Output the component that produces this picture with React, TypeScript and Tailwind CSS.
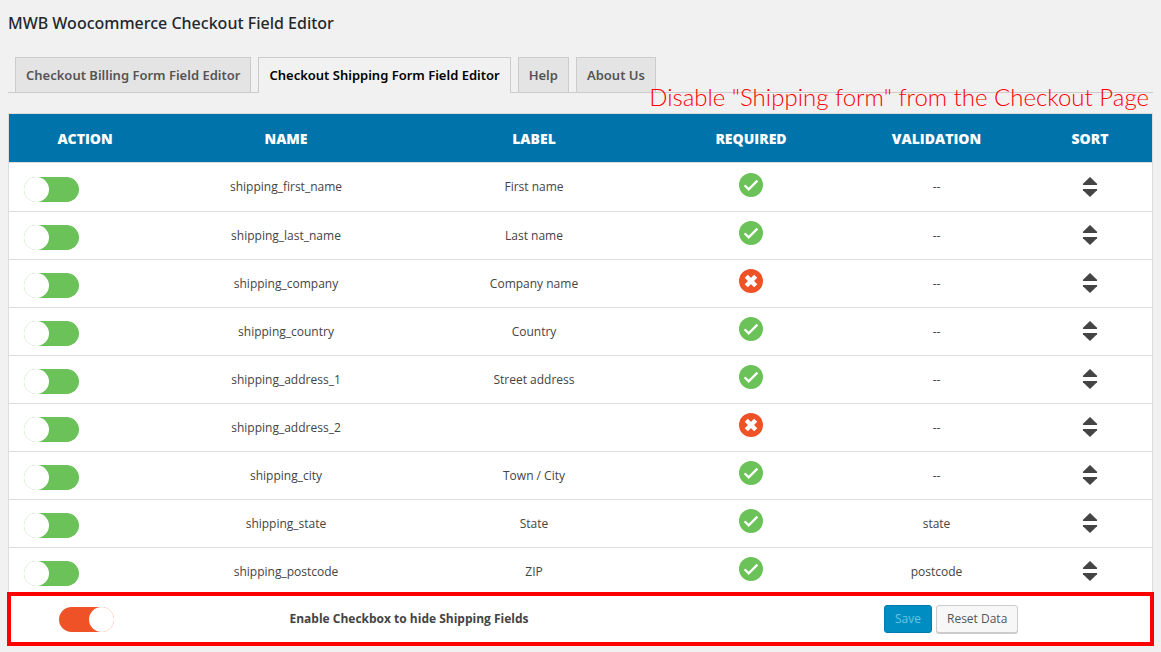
const tabs = [
  { label: 'Checkout Billing Form Field Editor', active: false },
  { label: 'Checkout Shipping Form Field Editor', active: true },
  { label: 'Help', active: false },
  { label: 'About Us', active: false },
];

// Pixel widths act as proportions: the fixed-layout table scales them to its own width.
const columns = [
  { title: 'ACTION', width: 'w-[152px]' },
  { title: 'NAME', width: 'w-[250px]' },
  { title: 'LABEL', width: 'w-[246px]' },
  { title: 'REQUIRED', width: 'w-[188px]' },
  { title: 'VALIDATION', width: 'w-[183px]' },
  { title: 'SORT', width: 'w-[124px]' },
];

const fields = [
  { name: 'shipping_first_name', label: 'First name', required: true, validation: '--' },
  { name: 'shipping_last_name', label: 'Last name', required: true, validation: '--' },
  { name: 'shipping_company', label: 'Company name', required: false, validation: '--' },
  { name: 'shipping_country', label: 'Country', required: true, validation: '--' },
  { name: 'shipping_address_1', label: 'Street address', required: true, validation: '--' },
  { name: 'shipping_address_2', label: '', required: false, validation: '--' },
  { name: 'shipping_city', label: 'Town / City', required: true, validation: '--' },
  { name: 'shipping_state', label: 'State', required: true, validation: 'state' },
  { name: 'shipping_postcode', label: 'ZIP', required: true, validation: 'postcode' },
];

function Toggle({ id, label, defaultChecked = false }: { id: string; label?: string; defaultChecked?: boolean }) {
  return (
    <input
      id={id}
      type="checkbox"
      aria-label={label}
      defaultChecked={defaultChecked}
      className="block h-[25px] w-[55px] cursor-pointer appearance-none rounded-full bg-[#6ac259] before:block before:size-[25px] before:rounded-full before:bg-white before:content-[''] checked:bg-[#f05228] checked:before:ml-[30px]"
    />
  );
}

function RequiredIcon({ required }: { required: boolean }) {
  return required ? (
    <svg viewBox="0 0 24 24" className="mx-auto block size-6" role="img" aria-label="Required">
      <circle cx="12" cy="12" r="12" fill="#6ac259" />
      <path d="M5.6 12.2 L9.7 16.3 L18.4 7.6" fill="none" stroke="#fff" strokeWidth="2.3" />
    </svg>
  ) : (
    <svg viewBox="0 0 24 24" className="mx-auto block size-6" role="img" aria-label="Optional">
      <circle cx="12" cy="12" r="12" fill="#f05228" />
      <path d="M7.3 7.3 L16.7 16.7 M16.7 7.3 L7.3 16.7" fill="none" stroke="#fff" strokeWidth="4.4" />
    </svg>
  );
}

function SortIcon() {
  return (
    <svg viewBox="0 0 16 20" className="mx-auto block h-5 w-4" aria-hidden="true">
      <path d="M8 0 L15 6.8 Q15.6 8 14.6 8 H1.4 Q0.4 8 1 6.8 Z" fill="#444" />
      <path d="M8 20 L15 13.2 Q15.6 12 14.6 12 H1.4 Q0.4 12 1 13.2 Z" fill="#444" />
    </svg>
  );
}

export default function App() {
  return (
    <main className="min-h-screen bg-[#f1f1f1] px-2 pt-2.5 font-['Open_Sans','Noto_Sans',sans-serif] text-[12px] text-[#444]">
      <h1 className="font-['Noto_Sans',sans-serif] text-[16px] leading-[26px] font-medium text-[#23282d]">
        MWB Woocommerce Checkout Field Editor
      </h1>

      <div className="relative">
        <nav className="mt-[21px] flex gap-[7px] border-b border-[#ccc] pl-[7px] font-['Noto_Sans',sans-serif] text-[13px] leading-6 font-semibold">
          {tabs.map((tab) => (
            <a
              key={tab.label}
              href="#"
              className={
                tab.active
                  ? '-mb-px border border-b-0 border-[#ccc] bg-[#f1f1f1] px-2.5 py-[5px] text-black'
                  : 'border border-b-0 border-[#ccc] bg-[#e4e4e4] px-2.5 py-[5px] text-[#555]'
              }
            >
              {tab.label}
            </a>
          ))}
        </nav>
        <p className="absolute top-6 right-1 font-[Lato,sans-serif] text-[24px] leading-8 font-light whitespace-nowrap text-[#ff0000]">
          Disable "Shipping form" from the Checkout Page
        </p>
      </div>

      <form className="mt-5 border border-[#ddd] bg-white">
        <table className="w-full table-fixed border-separate border-spacing-0 text-center">
          <thead>
            <tr>
              {columns.map((column) => (
                <th
                  key={column.title}
                  className={`${column.width} h-[49px] border-b border-[#ddd] bg-[#0073aa] p-0 text-[14px] font-extrabold text-white`}
                >
                  {column.title}
                </th>
              ))}
            </tr>
          </thead>
          <tbody>
            {fields.map((field) => (
              <tr key={field.name} className="h-12 first:h-[49px] *:border-b *:border-[#ddd]">
                <td className="pt-1 pl-[15px]">
                  <Toggle id={field.name} label={`Disable ${field.name}`} />
                </td>
                <td>{field.name}</td>
                <td>{field.label}</td>
                <td className="pb-[5px]">
                  <RequiredIcon required={field.required} />
                </td>
                <td>{field.validation}</td>
                <td className="pb-px">
                  <SortIcon />
                </td>
              </tr>
            ))}
          </tbody>
          <tfoot>
            <tr className="relative h-[46px]">
              <td className="pl-[50px]">
                <span className="pointer-events-none absolute -inset-x-0.5 -inset-y-1 border-4 border-[#ff0000]" />
                <Toggle id="hide-shipping" defaultChecked />
              </td>
              <td colSpan={2}>
                <label htmlFor="hide-shipping" className="font-bold">
                  Enable Checkbox to hide Shipping Fields
                </label>
              </td>
              <td />
              <td colSpan={2} className="pl-[39px]">
                <div className="flex gap-1">
                  <button
                    type="button"
                    disabled
                    className="h-7 rounded-[3px] border border-[#007cb2] bg-[#008ec2] px-2.5 text-[#66c6e4]"
                  >
                    Save
                  </button>
                  <button
                    type="button"
                    className="h-7 rounded-[3px] border border-[#ccc] bg-[#f7f7f7] px-2.5 text-[#555] shadow-[0_1px_0_#ccc]"
                  >
                    Reset Data
                  </button>
                </div>
              </td>
            </tr>
          </tfoot>
        </table>
      </form>
    </main>
  );
}
